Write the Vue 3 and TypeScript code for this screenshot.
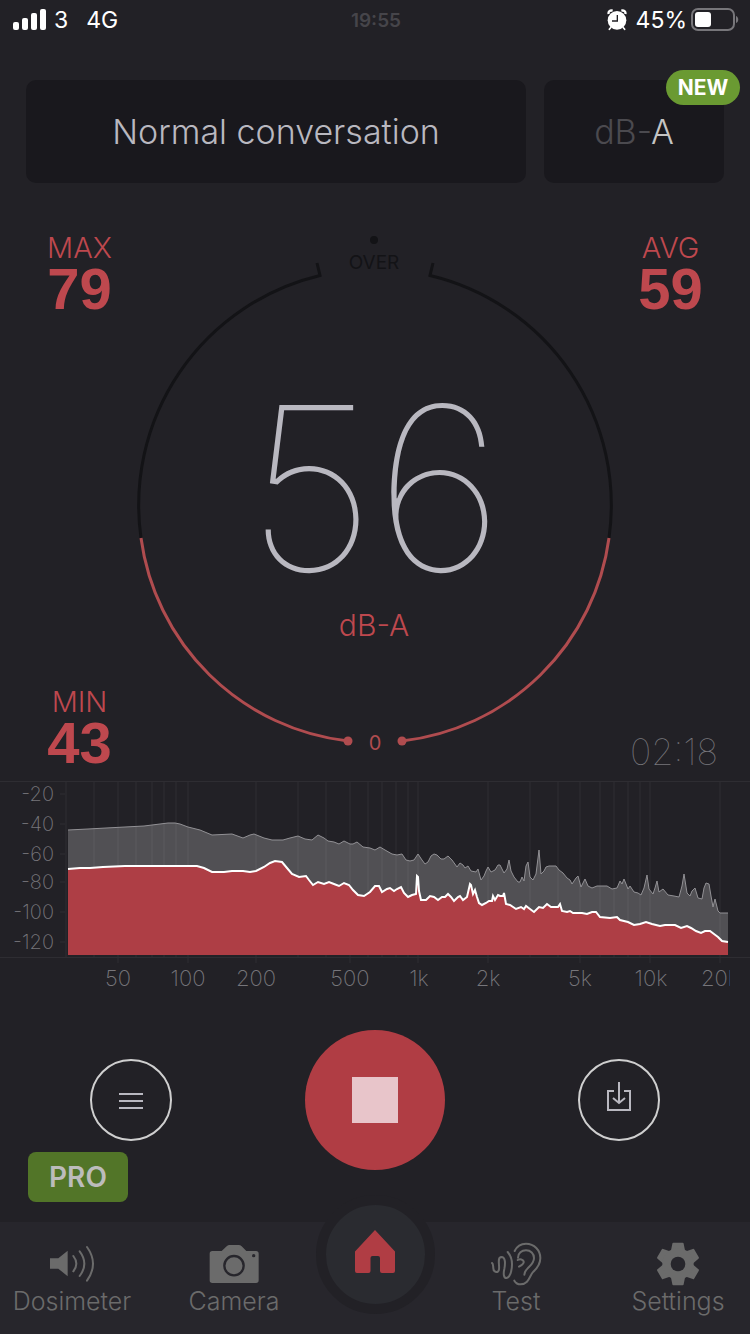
<script setup lang="ts">
type Point = [number, number]

interface Tab {
  id: string
  label: string
}

const peak: Point[] = [
  [68, 50], [88, 49], [106, 48], [125, 47], [144, 46], [152, 45], [160, 44], [168, 43], [175, 43], [180, 44],
  [188, 47], [200, 50], [212, 55], [232, 54], [243, 58], [250, 55], [254, 54], [264, 58], [272, 60], [283, 60],
  [290, 58], [298, 56], [305, 59], [312, 60], [318, 55], [324, 58], [328, 61], [334, 62], [339, 64], [344, 61],
  [350, 64], [353, 64], [357, 62], [363, 67], [370, 68], [375, 70], [380, 67], [385, 70], [392, 74], [397, 75],
  [402, 74], [406, 80], [410, 81], [414, 80], [418, 74], [422, 80], [425, 84], [428, 82], [431, 76], [434, 74],
  [437, 75], [441, 79], [444, 79], [448, 76], [452, 80], [457, 87], [460, 83], [463, 85], [465, 88], [468, 86],
  [471, 91], [476, 92], [478, 89], [481, 100], [484, 96], [486, 91], [488, 87], [491, 92], [495, 90], [498, 85],
  [500, 85], [502, 89], [504, 93], [507, 89], [509, 80], [511, 91], [514, 97], [518, 102], [520, 102], [522, 97],
  [524, 101], [526, 86], [528, 82], [530, 97], [533, 100], [536, 94], [538, 78], [539, 70], [541, 94], [544, 91],
  [546, 87], [549, 86], [556, 86], [559, 90], [563, 93], [567, 98], [570, 100], [572, 104], [576, 98], [578, 96],
  [581, 107], [585, 99], [588, 106], [592, 108], [597, 106], [603, 106], [607, 106], [612, 109], [617, 108], [620, 101],
  [622, 104], [624, 99], [628, 109], [630, 106], [634, 112], [638, 113], [641, 115], [644, 108], [647, 95], [649, 109],
  [653, 114], [655, 108], [657, 101], [659, 112], [663, 109], [668, 115], [674, 116], [679, 117], [682, 106], [684, 94],
  [687, 113], [690, 116], [692, 111], [695, 108], [698, 118], [702, 119], [704, 108], [706, 103], [709, 104], [711, 116],
  [713, 127], [715, 119], [718, 131], [720, 133], [728, 133],
]

const live: Point[] = [
  [68, 89], [80, 88], [90, 88], [103, 87], [125, 86], [163, 86], [180, 86], [197, 86], [204, 88], [212, 92],
  [224, 92], [232, 91], [243, 91], [250, 92], [256, 91], [264, 87], [270, 83], [275, 81], [282, 82], [287, 88],
  [292, 94], [299, 97], [306, 96], [309, 100], [313, 105], [318, 102], [324, 104], [329, 102], [334, 104], [339, 106],
  [344, 103], [349, 105], [353, 110], [358, 115], [364, 116], [370, 112], [375, 106], [379, 106], [382, 112], [387, 109],
  [390, 108], [394, 111], [397, 109], [401, 107], [404, 113], [408, 117], [412, 115], [416, 114], [417, 96], [418, 97],
  [419, 111], [421, 120], [426, 120], [430, 116], [434, 117], [438, 120], [442, 117], [445, 117], [448, 114], [451, 117],
  [454, 121], [458, 117], [460, 116], [463, 120], [467, 117], [470, 104], [471, 105], [473, 114], [475, 110], [477, 117],
  [479, 123], [482, 125], [486, 123], [489, 121], [492, 121], [493, 116], [495, 120], [498, 115], [500, 116], [503, 116],
  [504, 113], [506, 124], [510, 125], [516, 129], [521, 127], [524, 129], [526, 126], [530, 129], [534, 132], [539, 127],
  [543, 128], [547, 124], [551, 127], [558, 127], [560, 124], [562, 131], [567, 132], [570, 131], [573, 133], [582, 133],
  [587, 134], [592, 132], [596, 132], [600, 137], [610, 138], [617, 137], [620, 140], [628, 142], [634, 145], [640, 144],
  [646, 142], [652, 144], [660, 146], [665, 145], [675, 145], [681, 148], [687, 146], [691, 148], [696, 151], [701, 153],
  [705, 151], [710, 151], [714, 154], [718, 157], [722, 161], [728, 162],
]

const floor = 175
const line = (pts: Point[]): string => pts.map((p) => p.join(',')).join(' ')
const area = (pts: Point[]): string => `68,${floor} ${line(pts)} 728,${floor}`

const levels = [
  { text: '-20', y: 14 },
  { text: '-40', y: 44 },
  { text: '-60', y: 74 },
  { text: '-80', y: 102 },
  { text: '-100', y: 132 },
  { text: '-120', y: 162 },
]

const frequencies = [
  { text: '50', x: 118 },
  { text: '100', x: 188 },
  { text: '200', x: 256 },
  { text: '500', x: 350 },
  { text: '1k', x: 419 },
  { text: '2k', x: 488 },
  { text: '5k', x: 580 },
  { text: '10k', x: 651 },
  { text: '20k', x: 720 },
]

const minorLines = [66, 94, 136, 152, 164, 176, 298, 326, 368, 382, 396, 408, 530, 558, 600, 614, 628, 640]
const majorLines = [118, 188, 256, 350, 418, 488, 580, 650, 720]

const leftTabs: Tab[] = [
  { id: 'dosimeter', label: 'Dosimeter' },
  { id: 'camera', label: 'Camera' },
]
const rightTabs: Tab[] = [
  { id: 'test', label: 'Test' },
  { id: 'settings', label: 'Settings' },
]
</script>

<template>
  <div class="app">
    <header class="status">
      <div class="status-side">
        <svg class="signal" width="33" height="22" viewBox="0 0 33 22" aria-hidden="true">
          <rect x="0" y="13" width="6" height="8" rx="2" />
          <rect x="9" y="9" width="6" height="12" rx="2" />
          <rect x="18" y="4" width="6" height="17" rx="2" />
          <rect x="27" y="0" width="6" height="21" rx="2" />
        </svg>
        <span class="carrier">3</span>
        <span>4G</span>
      </div>
      <time class="clock">19:55</time>
      <div class="status-side status-end">
        <svg class="alarm" width="20" height="22" viewBox="0 0 60 66" aria-hidden="true">
          <circle cx="30" cy="34" r="28" fill="#fff" />
          <path d="M5 15C3 8 9 3 17 5M55 15C57 8 51 3 43 5" fill="none" stroke="#fff" stroke-width="7" />
          <path d="M11 56l-4 5M49 56l4 5" stroke="#fff" stroke-width="5" stroke-linecap="round" />
          <path d="M31 18v18H15" fill="none" stroke="#222126" stroke-width="4" />
        </svg>
        <span class="percent">45%</span>
        <svg width="48" height="24" viewBox="0 0 48 24" aria-hidden="true">
          <rect x="1" y="1" width="42" height="21" rx="6" fill="none" stroke="#77767a" stroke-width="2" />
          <rect x="4" y="4" width="16" height="15" rx="3" fill="#fff" />
          <path d="M45 8c3 1 3 6 0 7z" fill="#77767a" />
        </svg>
      </div>
    </header>

    <section class="cards">
      <button class="card" type="button">Normal conversation</button>
      <button class="card" type="button">
        <span class="dim">dB-</span><span class="weighting">A</span>
        <span class="badge">NEW</span>
      </button>
    </section>

    <main class="meter">
      <div class="side">
        <div class="stat">
          <span class="stat-label">MAX</span>
          <strong class="stat-value">79</strong>
        </div>
        <div class="stat">
          <span class="stat-label">MIN</span>
          <strong class="stat-value">43</strong>
        </div>
      </div>

      <svg class="gauge" viewBox="0 0 480 528" role="img" aria-label="56 dB-A">
        <g class="arc rest">
          <path d="M182 31L185 43.500A236 236 0 0 0 6 306" />
          <path d="M298 31L295 43.500A236 236 0 0 1 474 306" />
        </g>
        <g class="arc level">
          <path d="M6 306A236 236 0 0 0 213 509" />
          <path d="M474 306A236 236 0 0 1 267 509" />
        </g>
        <circle class="dot" cx="213" cy="509" r="4.500" />
        <circle class="dot" cx="267" cy="509" r="4.500" />
        <circle cx="239" cy="8" r="4" fill="#131316" />
        <text class="over" x="239" y="37">OVER</text>
        <text class="value" x="240" y="339">56</text>
        <text class="unit" x="239" y="404">dB-A</text>
        <text class="zero" x="240" y="518">0</text>
      </svg>

      <div class="side">
        <div class="stat">
          <span class="stat-label">AVG</span>
          <strong class="stat-value">59</strong>
        </div>
        <time class="elapsed">02:18</time>
      </div>
    </main>

    <svg class="spectrum" viewBox="0 0 750 212" role="img" aria-label="Frequency spectrum">
      <clipPath id="plot-edge"><rect x="0" y="0" width="730" height="212" /></clipPath>
      <g class="grid">
        <path v-for="x in minorLines" :key="x" :d="`M${x} 2V177`" />
        <path v-for="x in majorLines" :key="x" :d="`M${x} 2V183`" />
        <path v-for="l in levels" :key="l.text" :d="`M60 ${l.y}H66`" />
      </g>
      <path class="rule" d="M0 1.500H750M0 177.500H750" />
      <polygon class="peak-area" :points="area(peak)" />
      <polyline class="peak-line" :points="line(peak)" />
      <polygon class="live-area" :points="area(live)" />
      <polyline class="live-line" :points="line(live)" />
      <text v-for="l in levels" :key="l.text" class="level-label" x="54" :y="l.y + 7">{{ l.text }}</text>
      <g clip-path="url(#plot-edge)">
        <text v-for="f in frequencies" :key="f.text" class="freq-label" :x="f.x" y="206">{{ f.text }}</text>
      </g>
    </svg>

    <section class="controls">
      <button class="round" type="button" aria-label="History">
        <svg width="24" height="18" viewBox="0 0 24 18"><path d="M0 3h24M0 10h24M0 17h24" /></svg>
      </button>
      <button class="stop" type="button" aria-label="Stop"><span class="stop-mark"></span></button>
      <button class="round save" type="button" aria-label="Save">
        <svg width="24" height="30" viewBox="0 0 24 30">
          <path d="M7 9H1v19h22V9h-6M12 0v21M6 16l6 5 6-5" />
        </svg>
      </button>
    </section>
    <button class="pro" type="button">PRO</button>

    <nav class="tabs">
      <a v-for="tab in leftTabs" :key="tab.id" class="tab" :href="`#${tab.id}`">
        <span class="tab-icon">
          <svg v-if="tab.id === 'dosimeter'" width="46" height="38" viewBox="150 150 138 114" aria-hidden="true">
            <path d="M153 190h25l28-23v77l-28-23h-25z" fill="#6b6b6b" />
            <path d="M223 183q18 23 0 46M242 169q28 37 0 74M264 156q36 50 0 101" class="stroke" />
          </svg>
          <svg v-else width="50" height="38" viewBox="628 152 150 114" aria-hidden="true">
            <path fill="#6b6b6b" d="M638 170h28l15-14q4-4 9-4h27q5 0 9 4l14 14h29q8 0 8 8v80q0 8-8 8H638q-8 0-8-8v-80q0-8 8-8z" />
            <circle cx="703" cy="214" r="29" fill="none" stroke="#27262c" stroke-width="7" />
            <circle cx="762" cy="184" r="5" fill="#27262c" />
          </svg>
        </span>
        <span>{{ tab.label }}</span>
      </a>
      <a class="home" href="#home" aria-label="Home">
        <svg width="40" height="43" viewBox="0 0 40 43" aria-hidden="true">
          <path d="M20 0L40 21.500V41q0 2-2 2H27q-2 0-2-2V28q0-2-2-2h-5.500q-2 0-2 2v13q0 2-2 2H2q-2 0-2-2V21.500z" />
        </svg>
      </a>
      <a v-for="tab in rightTabs" :key="tab.id" class="tab" :href="`#${tab.id}`">
        <span class="tab-icon">
          <svg v-if="tab.id === 'test'" width="52" height="44" viewBox="345 141 156 132" aria-hidden="true">
            <g class="stroke">
              <path d="M351 204c4 2 3 8 4 16 1 14 15 15 17 3 2-14-6-36 7-37 13 0 12 20 9 36-3 13-3 28 7 27 10-2 16-22 16-41 0-18-6-29-13-37" />
              <path d="M419 168c6-13 18-22 34-22 25 0 43 20 43 43 0 18-9 30-21 41-12 12-12 37-38 38-9 0-15-4-19-11" />
              <path d="M429 188c0-14 11-22 24-22 14 0 24 10 24 23 0 15-10 22-19 31-7 7-10 12-10 19" />
              <path d="M428 195c7-4 16-2 18 4 2 7-4 11-14 16" />
            </g>
          </svg>
          <svg v-else width="44" height="44" viewBox="-66 -66 132 132" aria-hidden="true">
            <g fill="#6b6b6b">
              <path
                v-for="angle in [0, 60, 120, 180, 240, 300]"
                :key="angle"
                :transform="`rotate(${angle})`"
                d="M-22-36L-17-61q0-3 3-3h28q3 0 3 3l5 25z"
              />
              <circle r="47" />
            </g>
            <circle r="22" fill="#27262c" />
          </svg>
        </span>
        <span>{{ tab.label }}</span>
      </a>
    </nav>
  </div>
</template>

<style>
body {
  margin: 0;
  background: #222126;
}
</style>

<style scoped>
.app {
  display: flex;
  flex-direction: column;
  min-height: 100vh;
  background: #222126;
  color: #b9b8c0;
  font-family: Inter, "Liberation Sans", sans-serif;
}

button {
  padding: 0;
  border: 0;
  font: inherit;
  color: inherit;
  cursor: pointer;
}

a {
  text-decoration: none;
}

.status {
  display: grid;
  grid-template-columns: 1fr auto 1fr;
  align-items: center;
  height: 40px;
  padding: 0 11px 0 13px;
  color: #fff;
  font-size: 23px;
}

.status-side {
  display: flex;
  align-items: center;
}

.status-end {
  justify-content: flex-end;
}

.signal {
  fill: #fff;
}

.carrier {
  margin: 0 18px 0 8px;
}

.percent {
  margin: 0 4px 0 9px;
}

.clock {
  color: #46454a;
  font-size: 19px;
  font-weight: 600;
}

.cards {
  display: grid;
  grid-template-columns: 500fr 180fr;
  gap: 18px;
  padding: 40px 26px 0;
}

.card {
  position: relative;
  height: 103px;
  border-radius: 10px;
  background: #19181d;
  font-size: 34px;
  font-weight: 300;
}

.dim {
  color: #4b4a4f;
}

.weighting {
  color: #c4c4c4;
}

.badge {
  position: absolute;
  top: -10px;
  right: -16px;
  width: 74px;
  border-radius: 18px;
  background: #6a9a32;
  color: #fff;
  font-size: 21px;
  font-weight: 700;
  line-height: 35px;
}

.meter {
  display: grid;
  grid-template-columns: 1fr minmax(0, 480px) 1fr;
  min-height: 536px;
  padding: 49px 24px 12px;
}

.side {
  display: flex;
  flex-direction: column;
  align-items: center;
  justify-content: space-between;
}

.stat {
  display: flex;
  flex-direction: column;
  align-items: center;
  color: #be484e;
}

.stat-label {
  font-size: 29px;
  font-weight: 300;
  line-height: 32px;
}

.stat-value {
  font-family: "Liberation Sans", Arial, sans-serif;
  font-size: 58px;
  line-height: 50px;
}

.elapsed {
  align-self: flex-end;
  padding-right: 8px;
  color: #77767b;
  font-size: 36px;
  font-weight: 100;
  line-height: 32px;
}

.gauge {
  display: block;
  width: 100%;
  align-self: start;
}

.gauge text {
  text-anchor: middle;
}

.arc {
  fill: none;
  stroke-width: 3;
}

.rest {
  stroke: #131316;
}

.level {
  stroke: #b04c4f;
}

.dot {
  fill: #b04c4f;
}

.over {
  fill: #131316;
  font-size: 19px;
}

.value {
  fill: #b9b8c0;
  font-size: 228px;
  font-weight: 100;
}

.unit {
  fill: #be484e;
  font-size: 30px;
  font-weight: 300;
}

.zero {
  fill: #b04c4f;
  font-size: 20px;
}

.spectrum {
  display: block;
  width: 100%;
}

.grid {
  stroke: #28272c;
  stroke-width: 2;
}

.rule {
  stroke: #2e2d32;
}

.peak-area {
  fill: #fff;
  fill-opacity: 0.217;
}

.peak-line {
  fill: none;
  stroke: #929195;
}

.live-area {
  fill: #ae3e45;
}

.live-line {
  fill: none;
  stroke: #fff;
  stroke-width: 2;
}

.level-label {
  fill: #77767b;
  font-size: 20px;
  font-weight: 200;
  text-anchor: end;
}

.freq-label {
  fill: #77767b;
  font-size: 22px;
  font-weight: 200;
  text-anchor: middle;
}

.controls {
  display: grid;
  grid-template-columns: repeat(3, 1fr);
  place-items: center;
  padding: 38px 9px 0;
}

.round {
  display: grid;
  place-items: center;
  width: 82px;
  height: 82px;
  border: 2px solid #cfcfcf;
  border-radius: 50%;
  background: none;
}

.round svg {
  fill: none;
  stroke: #b9b8c0;
  stroke-width: 2;
}

.save svg {
  margin-bottom: 6px;
}

.stop {
  display: grid;
  place-items: center;
  width: 140px;
  height: 140px;
  border-radius: 50%;
  background: #b03d44;
}

.stop-mark {
  width: 46px;
  height: 46px;
  background: #e8c5ca;
}

.pro {
  align-self: flex-start;
  width: 100px;
  height: 50px;
  margin: -18px 0 20px 28px;
  border-radius: 8px;
  background: #527528;
  color: #bcbcbc;
  font-size: 28px;
  font-weight: 600;
}

.tabs {
  display: grid;
  grid-template-columns: minmax(0, 144fr) minmax(0, 180fr) minmax(0, 102fr) minmax(0, 180fr) minmax(0, 144fr);
  align-items: start;
  box-sizing: border-box;
  height: 112px;
  margin-top: auto;
  padding-top: 19px;
  background: #27262c;
}

.tab {
  display: flex;
  flex-direction: column;
  align-items: center;
  color: #6b6b6b;
  font-size: 25px;
  font-weight: 300;
  line-height: 28px;
}

.tab-icon {
  display: flex;
  align-items: center;
  height: 46px;
}

.stroke {
  fill: none;
  stroke: #6b6b6b;
  stroke-width: 6;
  stroke-linecap: round;
}

.home {
  display: grid;
  place-items: center;
  justify-self: center;
  width: 99px;
  height: 99px;
  margin-top: -46px;
  border: 10px solid #222126;
  border-radius: 50%;
  background: #2a2b30;
}

.home svg {
  margin-bottom: 6px;
  fill: #b03d44;
}
</style>
